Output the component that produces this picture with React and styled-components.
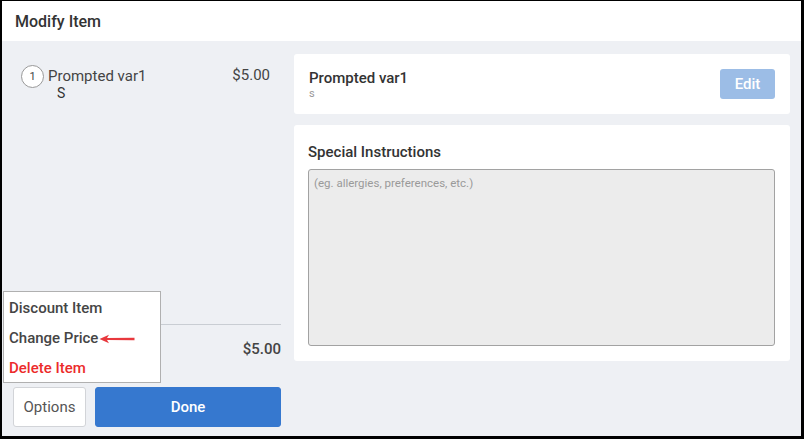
import React from 'react'
import styled, { createGlobalStyle } from 'styled-components'

const Global = createGlobalStyle`
    html, body { margin: 0; padding: 0; background: #fff; }
    * { box-sizing: border-box; }
    body { font-family: Roboto, "Liberation Sans", Arial, sans-serif; }
`

const Frame = styled.div`
    width: 804px;
    height: 439px;
    border: 2px solid #000;
    border-top-width: 1px;
    border-bottom-width: 3px;
    border-right-width: 3px;
    display: flex;
    flex-direction: column;
    background: #eef0f4;
`

const Header = styled.div`
    height: 40px;
    background: #fff;
    display: flex;
    align-items: center;
    padding-left: 13px;
    font-size: 16px;
    font-weight: 500;
    color: #333;
`

const Body = styled.div`
    flex: 1;
    display: flex;
    min-height: 0;
`

const LeftCol = styled.div`
    position: relative;
    width: 288px;
    display: flex;
    flex-direction: column;
    padding: 24px 9px 9px 11px;
`

const ItemRow = styled.div`
    display: flex;
    align-items: flex-start;
    padding: 0 11px 0 8px;
`

const Qty = styled.div`
    width: 23px;
    height: 23px;
    border-radius: 50%;
    border: 1px solid #999;
    background: #fff;
    display: flex;
    align-items: center;
    justify-content: center;
    font-size: 11px;
    color: #444;
    flex-shrink: 0;
`

const ItemText = styled.div`
    flex: 1;
    margin-left: 4px;
    color: #444;
    font-size: 15px;
    line-height: 17px;
    padding-top: 3px;
`

const ItemMod = styled.div`
    padding-left: 9px;
    color: #333;
    font-size: 14px;
`

const Price = styled.div`
    font-size: 15px;
    line-height: 17px;
    color: #444;
    padding-top: 2px;
`

const Spacer = styled.div`
    flex: 1;
`

const Divider = styled.div`
    height: 1px;
    background: #c9cdd3;
`

const TotalRow = styled.div`
    display: flex;
    justify-content: flex-end;
    margin: 14px 0 28px;
    font-size: 15px;
    font-weight: 500;
    line-height: 20px;
    color: #444;
`

const Buttons = styled.div`
    display: flex;
    gap: 9px;
    height: 40px;
`

const Button = styled.button`
    font-family: inherit;
    font-size: 15px;
    border-radius: 3px;
    cursor: pointer;
    width: ${p => (p.$primary ? 'auto' : '73px')};
    flex: ${p => (p.$primary ? 1 : 'none')};
    background: ${p => (p.$primary ? '#3678cf' : '#fff')};
    color: ${p => (p.$primary ? '#fff' : '#555')};
    border: 1px solid ${p => (p.$primary ? '#3678cf' : '#d2d4d8')};
    font-weight: ${p => (p.$primary ? 500 : 400)};
`

const Menu = styled.div`
    position: absolute;
    left: 1px;
    bottom: 53px;
    width: 158px;
    height: 92px;
    background: #fff;
    border: 1px solid #b0b0b0;
    padding-top: 1px;
`

const MenuItem = styled.div`
    height: 30px;
    display: flex;
    align-items: center;
    padding-left: 5px;
    font-size: 15px;
    font-weight: 500;
    color: ${p => (p.$danger ? '#ec2b2b' : '#454545')};
`

const Arrow = styled.svg`
    margin-left: 1px;
    margin-top: 1px;
`

const RightCol = styled.div`
    flex: 1;
    display: flex;
    flex-direction: column;
    gap: 11px;
    padding: 13px 11px 0 4px;
`

const Card = styled.div`
    background: #fff;
    border-radius: 3px;
    padding: ${p => p.$pad || '0 15px'};
`

const ItemCard = styled(Card)`
    height: 60px;
    display: flex;
    align-items: center;
    justify-content: space-between;
`

const CardTitle = styled.div`
    font-size: 15px;
    font-weight: 500;
    color: #333;
    line-height: 18px;
`

const CardSub = styled.div`
    font-size: 11px;
    color: #999;
    line-height: 13px;
`

const EditButton = styled.button`
    width: 55px;
    height: 30px;
    border: none;
    border-radius: 3px;
    background: #9cbde6;
    color: #fff;
    font-family: inherit;
    font-size: 15px;
    font-weight: 500;
`

const InstructionsCard = styled(Card)`
    height: 236px;
    display: flex;
    flex-direction: column;
`

const Notes = styled.textarea`
    flex: 1;
    margin-top: 8px;
    resize: none;
    background: #ececec;
    border: 1.5px solid #a2a2a2;
    border-radius: 3px;
    padding: 6px 5px;
    font-family: inherit;
    font-size: 11.5px;
    color: #555;
    &::placeholder { color: #9a9a9a; }
`

export default function App() {
    return (
        <>
            <Global />
            <Frame>
                <Header>Modify Item</Header>
                <Body>
                    <LeftCol>
                        <ItemRow>
                            <Qty>1</Qty>
                            <ItemText>
                                Prompted var1
                                <ItemMod>S</ItemMod>
                            </ItemText>
                            <Price>$5.00</Price>
                        </ItemRow>
                        <Spacer />
                        <Divider />
                        <TotalRow>$5.00</TotalRow>
                        <Buttons>
                            <Button>Options</Button>
                            <Button $primary>Done</Button>
                        </Buttons>
                        <Menu>
                            <MenuItem>Discount Item</MenuItem>
                            <MenuItem>
                                Change Price
                                <Arrow width="36" height="10" viewBox="0 0 36 10">
                                    <path d="M0.5 5 L10 0.8 L8 4 L35.5 3.8 L35.5 6.2 L8 6 L10 9.2 Z" fill="#e8383d" />
                                </Arrow>
                            </MenuItem>
                            <MenuItem $danger>Delete Item</MenuItem>
                        </Menu>
                    </LeftCol>
                    <RightCol>
                        <ItemCard>
                            <div>
                                <CardTitle>Prompted var1</CardTitle>
                                <CardSub>s</CardSub>
                            </div>
                            <EditButton>Edit</EditButton>
                        </ItemCard>
                        <InstructionsCard $pad="18px 15px 15px 14px">
                            <CardTitle>Special Instructions</CardTitle>
                            <Notes placeholder="(eg. allergies, preferences, etc.)" />
                        </InstructionsCard>
                    </RightCol>
                </Body>
            </Frame>
        </>
    )
}
